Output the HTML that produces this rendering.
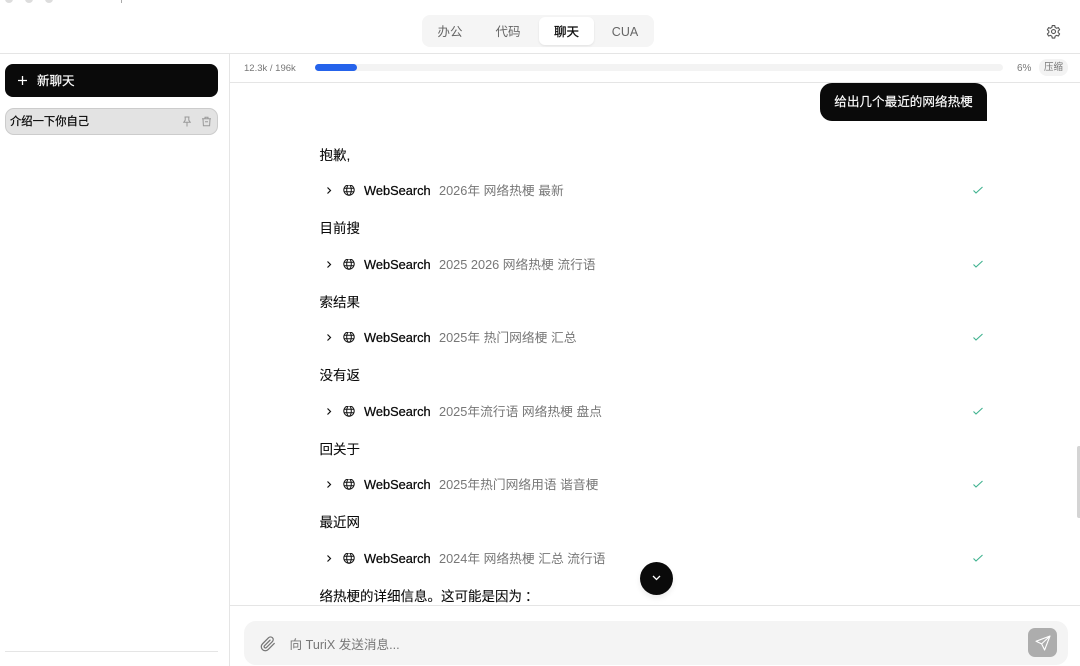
<!DOCTYPE html>
<html lang="zh">
<head>
<meta charset="utf-8">
<title>TuriX</title>
<style>
*{box-sizing:border-box;margin:0;padding:0}
html,body{width:1080px;height:666px;overflow:hidden;background:#fff}
body{position:relative;font-family:"Liberation Sans","Noto Sans CJK SC",sans-serif;color:#0a0a0a}
.a{position:absolute;white-space:nowrap}
.line{position:absolute;background:#e5e5e5}
.tab{position:absolute;top:18px;height:28px;line-height:28px;text-align:center;font-size:12.5px;color:#666}
.p{position:absolute;left:319.5px;font-size:13.5px;line-height:20px;height:20px;white-space:nowrap;color:#0a0a0a;-webkit-text-stroke:.1px #0a0a0a}
.ws{position:absolute;left:364px;font-size:12.8px;line-height:18px;height:18px;white-space:nowrap;color:#0a0a0a;-webkit-text-stroke:.25px #0a0a0a}
.q{position:absolute;left:439px;font-size:12.75px;line-height:18px;height:18px;white-space:nowrap;color:#777}
svg{position:absolute;display:block}
</style>
</head>
<body>
<!-- top remnants -->
<div class="a" style="left:5px;top:-5px;width:8px;height:8px;border-radius:50%;background:#ddd"></div>
<div class="a" style="left:25px;top:-5px;width:8px;height:8px;border-radius:50%;background:#ddd"></div>
<div class="a" style="left:45px;top:-5px;width:8px;height:8px;border-radius:50%;background:#ddd"></div>
<div class="a" style="left:121px;top:0;width:1px;height:3px;background:#aaa"></div>

<!-- header -->
<div class="a" style="left:422px;top:15px;width:232px;height:32px;border-radius:8px;background:#f5f5f5"></div>
<div class="a" style="left:539px;top:17px;width:55px;height:28px;border-radius:6px;background:#fff;box-shadow:0 1px 2px rgba(0,0,0,.08)"></div>
<div class="tab" style="left:424px;width:52px">办公</div>
<div class="tab" style="left:482px;width:52px">代码</div>
<div class="tab" style="left:540px;width:53px;color:#0a0a0a;-webkit-text-stroke:.25px #0a0a0a">聊天</div>
<div class="tab" style="left:599px;width:52px">CUA</div>
<svg style="left:1046px;top:24px" width="15" height="15" viewBox="0 0 24 24" fill="none" stroke="#555" stroke-width="1.8" stroke-linejoin="round"><path d="M10 2.5h4l.6 3 2.3 1.3 2.9-1 2 3.4-2.3 2v2.6l2.3 2-2 3.4-2.9-1-2.3 1.3-.6 3h-4l-.6-3-2.3-1.3-2.9 1-2-3.4 2.3-2v-2.6l-2.3-2 2-3.4 2.9 1 2.3-1.3z"/><circle cx="12" cy="12" r="3.2"/></svg>
<div class="line" style="left:0;top:53px;width:1080px;height:1px"></div>

<!-- sidebar -->
<div class="line" style="left:229px;top:54px;width:1px;height:612px"></div>
<div class="a" style="left:5px;top:64px;width:213px;height:33px;border-radius:8px;background:#0a0a0a"></div>
<svg style="left:16px;top:74px" width="13" height="13" viewBox="0 0 13 13" stroke="#fff" stroke-width="1.3" fill="none"><path d="M6.5 2v9M2 6.5h9"/></svg>
<div class="a" style="left:37px;top:72px;font-size:12.5px;line-height:19px;color:#fff;-webkit-text-stroke:.2px #fff">新聊天</div>
<div class="a" style="left:5px;top:108px;width:213px;height:27px;border-radius:9px;background:#e3e3e3;border:1px solid #ccc"></div>
<div class="a" style="left:10px;top:113px;font-size:11.3px;line-height:18px;color:#0a0a0a;-webkit-text-stroke:.25px #0a0a0a">介绍一下你自己</div>
<svg style="left:182px;top:116px" width="10" height="11" viewBox="0 0 10 11" fill="none" stroke="#999" stroke-width="1"><path d="M2.5 1h5M3.2 1v3.2L1.8 6.2h6.4L6.8 4.2V1M5 6.2V10.5"/></svg>
<svg style="left:201px;top:116px" width="11" height="11" viewBox="0 0 11 11" fill="none" stroke="#999" stroke-width="1"><path d="M1 2.8h9M4 2.8V1.2h3v1.6M2 2.8l.4 7h6.2l.4-7M4 5.8h3"/></svg>
<div class="line" style="left:5px;top:651px;width:213px;height:1px"></div>

<!-- token bar -->
<div class="a" style="left:244px;top:61px;font-size:9.5px;line-height:15px;color:#777">12.3k / 196k</div>
<div class="a" style="left:315px;top:64px;width:688px;height:7px;border-radius:4px;background:#f3f3f3"></div>
<div class="a" style="left:315px;top:64px;width:42px;height:7px;border-radius:4px;background:#2563eb"></div>
<div class="a" style="left:1017px;top:60.5px;font-size:10px;line-height:15px;color:#777">6%</div>
<div class="a" style="left:1039px;top:59px;width:29px;height:17px;border-radius:8px;background:#f3f3f3;font-size:9.5px;line-height:18px;text-align:center;color:#777">压缩</div>
<div class="line" style="left:230px;top:82px;width:850px;height:1px"></div>

<!-- user bubble -->
<div class="a" style="left:820px;top:83px;width:167px;height:38px;background:#0a0a0a;border-radius:12px 12px 0 12px;color:#fff;font-size:12.6px;line-height:39px;text-align:center;-webkit-text-stroke:.15px #fff">给出几个最近的网络热梗</div>

<!-- stream -->
<div class="p" style="top:146px">抱歉,</div>
<div class="ws" style="top:182px">WebSearch</div><div class="q" style="top:182px">2026年 网络热梗 最新</div>
<div class="p" style="top:219px">目前搜</div>
<div class="ws" style="top:256px">WebSearch</div><div class="q" style="top:256px">2025 2026 网络热梗 流行语</div>
<div class="p" style="top:293px">索结果</div>
<div class="ws" style="top:329px">WebSearch</div><div class="q" style="top:329px">2025年 热门网络梗 汇总</div>
<div class="p" style="top:366px">没有返</div>
<div class="ws" style="top:403px">WebSearch</div><div class="q" style="top:403px">2025年流行语 网络热梗 盘点</div>
<div class="p" style="top:440px">回关于</div>
<div class="ws" style="top:476px">WebSearch</div><div class="q" style="top:476px">2025年热门网络用语 谐音梗</div>
<div class="p" style="top:513px">最近网</div>
<div class="ws" style="top:550px">WebSearch</div><div class="q" style="top:550px">2024年 网络热梗 汇总 流行语</div>
<div class="p" style="top:587px">络热梗的详细信息。这可能是因为<span style="margin-left:3px">：</span></div>

<!-- row icons -->
<svg width="0" height="0"><defs>
<g id="r">
<path d="M5.5 2.5l3 3-3 3" fill="none" stroke="#111" stroke-width="1.2"/>
<g transform="translate(21,-1.5)" fill="none" stroke="#111" stroke-width="1"><circle cx="6" cy="6.5" r="5.2"/><ellipse cx="6" cy="6.5" rx="2.3" ry="5.2"/><path d="M1 4.8h10M1 8.2h10"/></g>
<path d="M651.5 5.5l2.5 2.5 6.5-6" fill="none" stroke="#3fb28f" stroke-width="1.1"/>
</g></defs></svg>
<svg style="left:322px;top:185px" width="670" height="14" viewBox="0 0 670 14"><use href="#r"/></svg>
<svg style="left:322px;top:259px" width="670" height="14" viewBox="0 0 670 14"><use href="#r"/></svg>
<svg style="left:322px;top:332px" width="670" height="14" viewBox="0 0 670 14"><use href="#r"/></svg>
<svg style="left:322px;top:406px" width="670" height="14" viewBox="0 0 670 14"><use href="#r"/></svg>
<svg style="left:322px;top:479px" width="670" height="14" viewBox="0 0 670 14"><use href="#r"/></svg>
<svg style="left:322px;top:553px" width="670" height="14" viewBox="0 0 670 14"><use href="#r"/></svg>

<!-- scrollbar -->
<div class="a" style="left:1077px;top:446px;width:3px;height:72px;border-radius:2px 0 0 2px;background:#d4d4d4"></div>

<!-- scroll down -->
<div class="a" style="left:640px;top:562px;width:33px;height:33px;border-radius:50%;background:#0a0a0a;box-shadow:0 3px 6px rgba(0,0,0,.08)"></div>
<svg style="left:651px;top:573px" width="11" height="10" viewBox="0 0 11 10" fill="none" stroke="#fff" stroke-width="1.3"><path d="M2 3l3.5 3.5L9 3"/></svg>

<!-- composer -->
<div class="a" style="left:230px;top:605px;width:850px;height:61px;background:#fff"></div>
<div class="line" style="left:230px;top:605px;width:850px;height:1px"></div>
<div class="a" style="left:244px;top:621px;width:824px;height:44px;border-radius:12px;background:#f4f4f4"></div>
<svg style="left:260px;top:636px" width="16" height="16" viewBox="0 0 24 24" fill="none" stroke="#777" stroke-width="1.9" stroke-linecap="round" stroke-linejoin="round"><path d="M21.4 11.1l-9.2 9.2a6 6 0 0 1-8.5-8.5l9.2-9.2a4 4 0 0 1 5.7 5.7l-9.2 9.2a2 2 0 0 1-2.8-2.8l8.5-8.5"/></svg>
<div class="a" style="left:289.5px;top:636px;font-size:12.6px;line-height:19px;color:#777">向 TuriX 发送消息...</div>
<div class="a" style="left:1028px;top:628px;width:29px;height:29px;border-radius:7px;background:#adadad"></div>
<svg style="left:1035px;top:635px" width="16" height="16" viewBox="0 0 16 16" fill="none" stroke="#fff" stroke-width="1.1" stroke-linejoin="round"><path d="M15 1L1 6.3l5.6 2.6L9.6 15zM15 1L6.6 8.9"/></svg>
</body>
</html>
